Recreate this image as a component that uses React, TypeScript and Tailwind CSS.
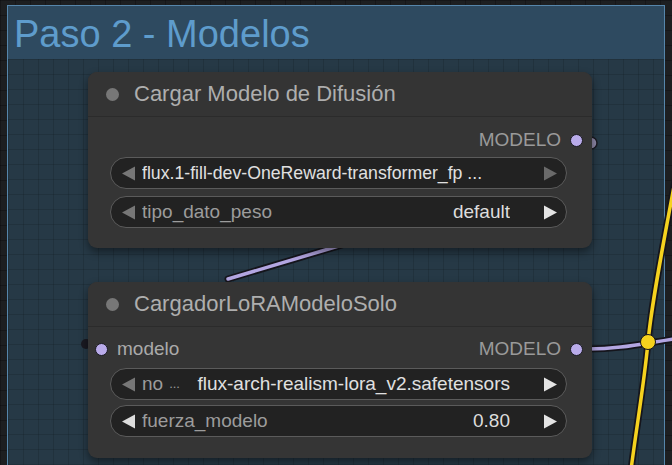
import React from "react";

const Tri = ({ dir, className }: { dir: "l" | "r"; className: string }) => (
  <svg width="15" height="15" viewBox="0 0 15 15" className={className}>
    {dir === "l" ? <polygon points="14,0.5 14,14.5 1,7.5" fill="currentColor" /> : <polygon points="1,0.5 1,14.5 14,7.5" fill="currentColor" />}
  </svg>
);

const Widget = ({
  leftDim,
  rightDim,
  children,
}: {
  leftDim?: boolean;
  rightDim?: boolean;
  children: React.ReactNode;
}) => (
  <div className="ml-[22px] mr-[25px] h-[32px] rounded-full bg-[#222222] border border-[#5b5b5b] flex items-center pl-[10px] pr-[8px]">
    <Tri dir="l" className={leftDim ? "text-[#777777]" : "text-[#dddddd]"} />
    <div className="flex-1 flex items-center ml-[6px] mr-[33px] min-w-0 whitespace-nowrap overflow-hidden">{children}</div>
    <Tri dir="r" className={rightDim ? "text-[#6a6a6a]" : "text-[#e4e4e4]"} />
  </div>
);

const Dot = () => (
  <div className="w-[13px] h-[13px] rounded-full bg-[#b9abea] border-[1.5px] border-[#1a1a22]" />
);

const Node = ({ top, title, children }: { top: number; title: string; children: React.ReactNode }) => (
  <div
    className={`absolute left-[88px] w-[504px] rounded-[9px] bg-[#353535] shadow-[0_4px_8px_rgba(0,0,0,0.45)] ${top === 72 ? "top-[72px] h-[176px]" : "top-[282px] h-[176px]"}`}
  >
    <div className="h-[45px] flex items-center border-b border-[#2b2b2b] bg-[#343434] rounded-t-[9px]">
      <div className="ml-[18px] w-[13px] h-[13px] rounded-full bg-[#777777]" />
      <div className="ml-[15px] text-[22px] leading-none text-[#aeaeae]">{title}</div>
    </div>
    {children}
  </div>
);

export default function App() {
  return (
    <div
      className="relative w-[672px] h-[465px] overflow-hidden bg-[#1d1f21] [font-family:'Liberation_Sans',Arial,sans-serif]"
    >
      {/* outer grid */}
      <div className="absolute inset-0 bg-[linear-gradient(rgba(0,0,0,0.25)_1px,transparent_1px),linear-gradient(90deg,rgba(0,0,0,0.25)_1px,transparent_1px)] bg-[size:15px_15px]" />
      {/* group */}
      <div className="absolute left-[7px] top-[5px] w-[658px] h-[470px] border-[1.5px] border-[#5686ab] flex flex-col bg-[#263946]">
        <div className="h-[53px] bg-[#2e4a60] flex items-center pl-[6px]">
          <span className="text-[38px] leading-none text-[#5e9ccc] mt-[2px]">Paso 2 - Modelos</span>
        </div>
        <div className="flex-1 bg-[linear-gradient(rgba(0,0,0,0.12)_1px,transparent_1px),linear-gradient(90deg,rgba(0,0,0,0.12)_1px,transparent_1px)] bg-[size:15px_15px]" />
      </div>

      {/* links */}
      <svg className="absolute inset-0" width="672" height="465" viewBox="0 0 672 465">
        <path d="M 228 279 L 352 242" stroke="#15151c" strokeWidth="7" fill="none" strokeLinecap="round" />
        <path d="M 228 279 L 352 242" stroke="#b3a6e2" strokeWidth="3.5" fill="none" strokeLinecap="round" />
        <circle cx="591" cy="143" r="6" fill="#8e88a8" stroke="#1a1a22" strokeWidth="1.5" />
        <circle cx="86" cy="344" r="5" fill="#1a1a22" />
        <path d="M 588 349 C 620 349, 640 344, 680 338" stroke="#15151c" strokeWidth="7" fill="none" />
        <path d="M 588 349 C 620 349, 640 344, 680 338" stroke="#b3a6e2" strokeWidth="3.5" fill="none" />
        <path d="M 678 165 C 664 240, 652 300, 648 342 C 644 385, 636 430, 631 470" stroke="#15151c" strokeWidth="7" fill="none" />
        <path d="M 678 165 C 664 240, 652 300, 648 342 C 644 385, 636 430, 631 470" stroke="#f5d21e" strokeWidth="3.5" fill="none" />
        <circle cx="648" cy="342" r="7.5" fill="#f5d21e" stroke="#15151c" strokeWidth="1" />
      </svg>

      <Node top={72} title="Cargar Modelo de Difusión">
        <div className="h-[46px] flex items-center justify-end pr-[9px] gap-[9px]">
          <span className="text-[19px] text-[#9a9a9a]">MODELO</span>
          <Dot />
        </div>
        <div className="flex flex-col gap-[7px] -mt-[6px]">
          <Widget leftDim rightDim>
            <span className="text-[17.7px] text-[#e0e0e0]">flux.1-fill-dev-OneReward-transformer_fp ...</span>
          </Widget>
          <Widget leftDim>
            <span className="text-[19px] text-[#9c9c9c]">tipo_dato_peso</span>
            <span className="ml-auto text-[19px] text-[#dddddd]">default</span>
          </Widget>
        </div>
      </Node>

      <Node top={282} title="CargadorLoRAModeloSolo">
        <div className="h-[45px] flex items-center pl-[7px] pr-[9px]">
          <Dot />
          <span className="ml-[9px] text-[19px] text-[#aaaaaa]">modelo</span>
          <span className="ml-auto mr-[9px] text-[19px] text-[#9a9a9a]">MODELO</span>
          <Dot />
        </div>
        <div className="flex flex-col gap-[5px] -mt-[4px]">
          <Widget leftDim>
            <span className="text-[19px] text-[#9c9c9c]">no</span>
            <span className="ml-[6px] text-[13px] text-[#9c9c9c]">...</span>
            <span className="ml-auto text-[19px] text-[#e0e0e0]">flux-arch-realism-lora_v2.safetensors</span>
          </Widget>
          <Widget>
            <span className="text-[19px] text-[#9c9c9c]">fuerza_modelo</span>
            <span className="ml-auto text-[19px] text-[#dddddd]">0.80</span>
          </Widget>
        </div>
      </Node>
    </div>
  );
}
